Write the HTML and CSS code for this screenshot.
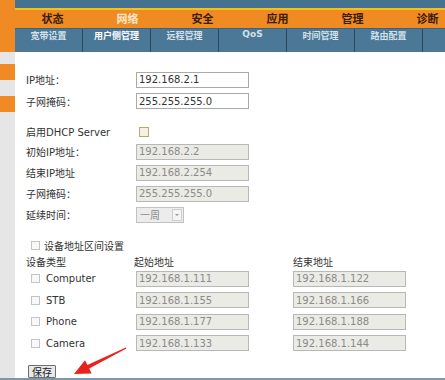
FILE: index.html
```html
<!DOCTYPE html>
<html lang="zh">
<head>
<meta charset="utf-8">
<title>用户侧管理</title>
<link rel="stylesheet" href="styles.css">
</head>
<body>
<div class="page">
  <aside class="side">
    <div class="side-top"></div>
    <div class="side-block first"></div>
    <div class="side-block"></div>
  </aside>
  <main class="main">
    <header class="top">
      <div class="top-strip"></div>
      <nav class="menu">
        <a>状态</a><a class="active">网络</a><a>安全</a><a>应用</a><a>管理</a><a>诊断</a>
      </nav>
      <nav class="tabs">
        <a>宽带设置</a><a class="active">用户侧管理</a><a>远程管理</a><a>QoS</a><a>时间管理</a><a>路由配置</a><a></a>
      </nav>
    </header>
    <form class="content">
      <div class="grid sec1">
        <label>IP地址：</label><input class="field" type="text" value="192.168.2.1">
        <label>子网掩码：</label><input class="field" type="text" value="255.255.255.0">
      </div>
      <div class="grid sec2">
        <label class="short">启用DHCP Server</label><span class="short"><input class="chk dhcp" type="checkbox"></span>
        <label>初始IP地址：</label><input class="field" type="text" value="192.168.2.2" disabled>
        <label>结束IP地址</label><input class="field" type="text" value="192.168.2.254" disabled>
        <label>子网掩码：</label><input class="field" type="text" value="255.255.255.0" disabled>
        <label>延续时间：</label><span class="select">一周</span>
      </div>
      <div class="grid sec3">
        <label class="range"><input class="chk" type="checkbox">设备地址区间设置</label>
        <span class="head">设备类型</span><span class="head start">起始地址</span><span class="head">结束地址</span>
        <label class="dev"><input class="chk" type="checkbox">Computer</label>
        <input class="field" type="text" value="192.168.1.111" disabled><input class="field" type="text" value="192.168.1.122" disabled>
        <label class="dev"><input class="chk" type="checkbox">STB</label>
        <input class="field" type="text" value="192.168.1.155" disabled><input class="field" type="text" value="192.168.1.166" disabled>
        <label class="dev"><input class="chk" type="checkbox">Phone</label>
        <input class="field" type="text" value="192.168.1.177" disabled><input class="field" type="text" value="192.168.1.188" disabled>
        <label class="dev"><input class="chk" type="checkbox">Camera</label>
        <input class="field" type="text" value="192.168.1.133" disabled><input class="field" type="text" value="192.168.1.144" disabled>
      </div>
      <button class="save" type="button">保存</button>
    </form>
  </main>
  <svg class="arrow" width="445" height="380" viewBox="0 0 445 380">
    <polygon points="126.4,348.6 89.2,368.6 91.6,373.4 74,374 85,360.3 87.4,365 125.8,347.4" fill="#e8231d"/>
  </svg>
</div>
</body>
</html>
```
FILE: styles.css
```css
html, body { margin: 0; padding: 0; }
body {
  font-family: "DejaVu Sans", "Noto Sans CJK SC", sans-serif;
  font-size: 10px;
  color: #333;
  background: #fff;
}
.page {
  position: relative;
  display: flex;
  height: 378px;
  border-bottom: 2px solid #7f97aa;
  overflow: hidden;
  background: #fff;
}
.side {
  width: 15px;
  flex: none;
  background: #e6e6e6;
  display: flex;
  flex-direction: column;
}
.side-top { height: 52px; background: #f08a22; }
.side-block { height: 16px; background: #f08a22; margin-top: 16px; }
.side-block.first { margin-top: 12px; }

.main { flex: 1; min-width: 0; display: flex; flex-direction: column; }
.top-strip { height: 8px; background: #44728f; border-bottom: 2px solid #f5c116; }
.menu { display: flex; height: 18px; background: #f08a22; overflow: hidden; }
.menu a {
  flex: none; width: 75px; text-align: center; line-height: 18px;
  font: bold 11px "Noto Sans CJK SC", sans-serif; color: #3a1c00;
}
.menu a.active { color: #fde6c8; }
.tabs { display: flex; height: 23px; background: #4a7896; border-top: 1px solid #3b6380; overflow: hidden; }
.tabs a {
  flex: none; width: 68px; box-sizing: border-box; border-right: 1px solid #2c4a5e;
  text-align: center; line-height: 23px;
  font: bold 9px "DejaVu Sans", "Noto Sans CJK SC", sans-serif; color: #d4e0ea;
}
.tabs a.active { color: #ffffff; }

.content { padding: 17px 0 0 11px; }
.grid { display: grid; align-items: center; }
.sec1 { grid-template-columns: 110px 113px; grid-auto-rows: 21.5px; }
.sec2 { grid-template-columns: 110px 113px; grid-template-rows: 19px; grid-auto-rows: 21px; margin-top: 10px; }
.sec3 { grid-template-columns: 110px 157px 113px; grid-template-rows: 18px 14px; grid-auto-rows: 21.5px; margin-top: 11px; }
.short { align-self: center; }

.field {
  box-sizing: border-box; width: 113px; height: 16px; margin: 0;
  padding: 0 2px; border: 1px solid #a9a9a9; background: #fff;
  font: 10px "DejaVu Sans", sans-serif; color: #333; outline: none;
}
.field:disabled { background: #ebebe6; border-color: #b8b8b8; color: #8a8a8a; }

.chk {
  appearance: none; -webkit-appearance: none; margin: 0;
  width: 9px; height: 9px; box-sizing: border-box;
  border: 1px solid #c4c4c4; background: #f8f8f8; flex: none;
}
.chk.dhcp { width: 10px; height: 10px; margin-left: 3px; border-color: #b9a878; background: #f6f2e2; display: block; }

.select {
  position: relative; box-sizing: border-box; width: 48px; height: 16px;
  border: 1px solid #c2c2c2; background: #ececec; color: #8a8a8a;
  font: 10px "Noto Sans CJK SC", sans-serif; line-height: 14px; padding-left: 3px;
}
.select::after {
  content: ""; position: absolute; right: 1px; top: 1px; width: 10px; height: 12px;
  box-sizing: border-box; border: 1px solid #cfcfcf; background: #f4f4f4;
}
.select::before {
  content: ""; position: absolute; right: 4px; top: 6px; z-index: 1;
  border-left: 2px solid transparent; border-right: 2px solid transparent; border-top: 2px solid #999;
}

.range { grid-column: 1 / -1; display: flex; align-items: center; gap: 4px; padding-left: 5px; }
.head { color: #333; }
.start { margin-left: -2px; }
.dev { display: flex; align-items: center; gap: 6px; padding-left: 5px; font-size: 10px; }

.save {
  display: block; box-sizing: border-box;
  margin-top: 11px; margin-left: 2px; height: 13px; padding: 0 3px;
  border: 1px solid #6e6e6e; background: #e9e9e9; border-radius: 1px;
  font: 10px "Noto Sans CJK SC", sans-serif; color: #222; line-height: 11px;
}
.arrow { position: absolute; left: 0; top: 0; pointer-events: none; }
```
